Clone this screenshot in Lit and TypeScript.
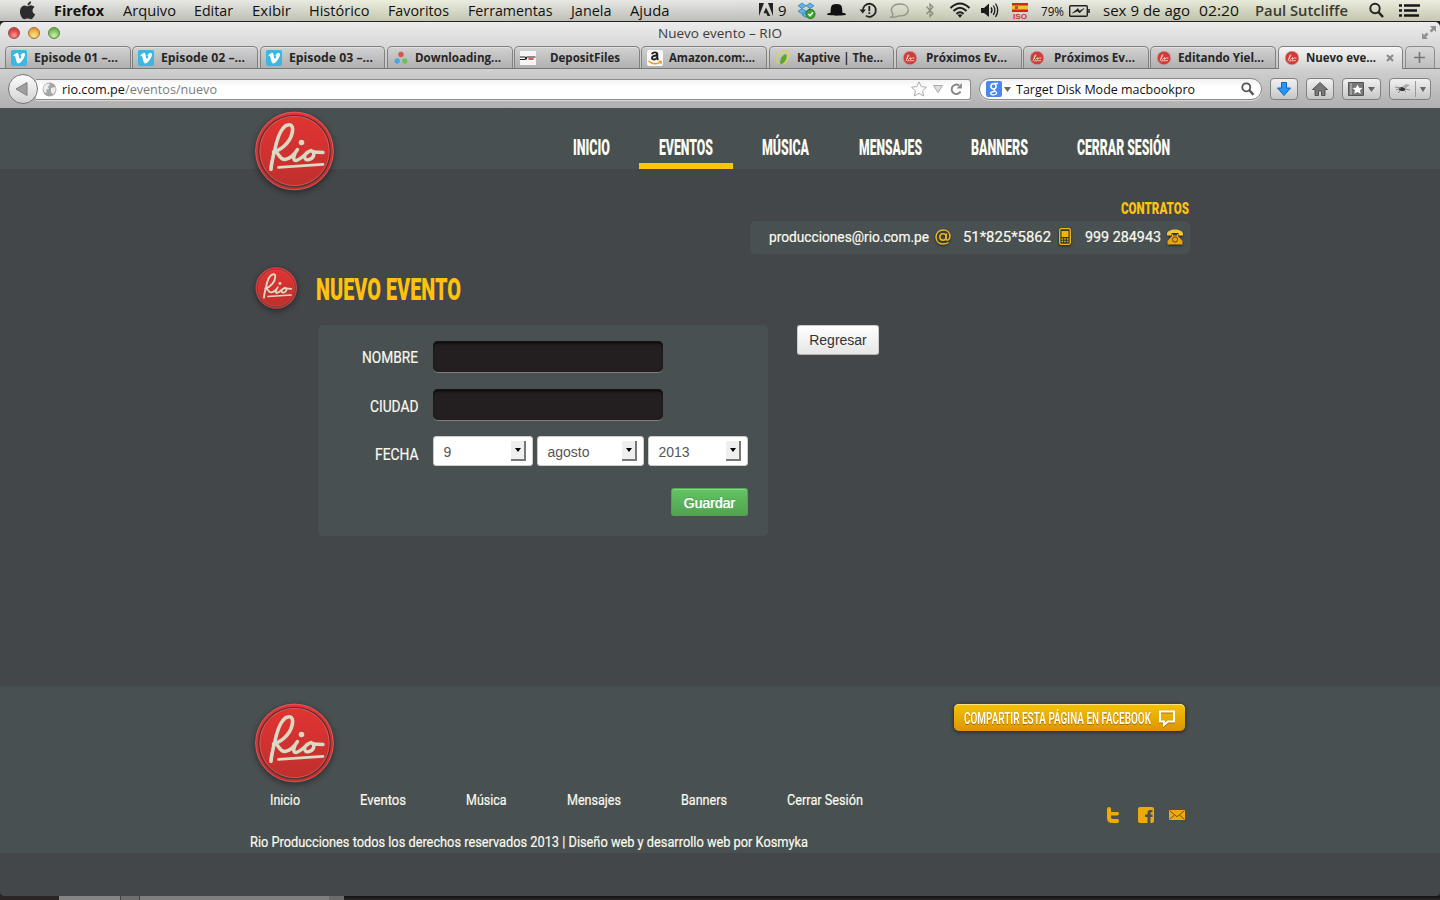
import { LitElement, html, svg, css, TemplateResult } from "lit";
import { customElement } from "lit/decorators.js";

// Single text line stretched to a known width; the slot may be wider than the text.
const line = (text: string, w: number, size: number, h: number, base: number, cls = "ui", slot = w, x = 0) => html`
  <svg class="line" width=${slot} height=${h} viewBox="0 0 ${slot} ${h}">
    <text class=${cls} x=${x} y=${base} font-size=${size} textLength=${w} lengthAdjust="spacingAndGlyphs">${text}</text>
  </svg>`;

const icon = (w: number, h: number, body: unknown, cls = "") =>
  html`<svg class="icon ${cls}" width=${w} height=${h} viewBox="0 0 ${w} ${h}">${body}</svg>`;

@customElement("rio-logo")
export class RioLogo extends LitElement {
  static properties = { size: { type: Number } };
  declare size: number;
  static styles = css`
    :host { display: block; line-height: 0; flex: none; }
    svg { overflow: visible; filter: drop-shadow(0 2px 3px rgba(0, 0, 0, 0.45)); }
  `;
  render() {
    return html`<svg width=${this.size} height=${this.size} viewBox="0 0 80 80">
      <defs><linearGradient id="g" x1="0" y1="0" x2="0" y2="1">
        <stop offset="0" stop-color="#e33433" /><stop offset="1" stop-color="#bd2f2d" />
      </linearGradient></defs>
      <circle cx="40.500" cy="40" r="39.2" fill="url(#g)" />
      <circle cx="40.500" cy="40" r="38.9" fill="none" stroke="#e8797a" stroke-width=".7" opacity=".8" />
      <circle cx="40.500" cy="40" r="35.7" fill="none" stroke="#4b3337" stroke-width="1.3" />
      <circle cx="40.500" cy="40" r="34.7" fill="none" stroke="#e8797a" stroke-width=".7" opacity=".75" />
      <g fill="none" stroke="#dad9c3" stroke-width="3.6" stroke-linecap="round" stroke-linejoin="round">
        <path d="M17 58.300C17.500 51 19 46 21 38C22.500 31 24.500 23 28.500 18C32 12.800 38.600 12 38.600 18C38.600 28 30 38 19.500 41" />
        <path d="M21 41C25 41 25 49 31 48.500C37 47.500 41 42.500 43.500 38.500C40 43 38 50 42 49.500C47 48.500 50 43.500 56 40C49.500 42 49 49.300 54 48.800C60 47.500 62 42 57 39.500C60 42 64 40.700 69 41.500" stroke-width="3.400" />
        <path d="M24.500 56.300L69 53.300" stroke-width="2.700" />
      </g>
      <circle cx="47.500" cy="31.500" r="2.800" fill="#dad9c3" />
    </svg>`;
  }
}

const vimeo = svg`<rect width="16" height="16" rx="2" fill="#3fb5e1"/><path d="M2.300 5.200L5.400 3C7 2.400 7.500 4 7.900 6.500C8.200 8.500 8.700 9.500 9.700 8C10.600 6.500 10.700 5.600 9.300 6C10 3.800 11.500 2.800 12.900 3C14.800 3.400 14.100 6.200 12.300 9C10.600 11.600 8.600 13.500 7.200 13.400C5.600 13.300 5.300 10.500 4.500 7.500C4.200 6.100 3.800 5.800 2.900 6.300Z" fill="#fff"/>`;
const trio = svg`<circle cx="8" cy="4.500" r="2.700" fill="#e2504e"/><circle cx="4.200" cy="11" r="2.700" fill="#44a9e0"/><circle cx="11.800" cy="11" r="2.700" fill="#6dc066"/>`;
const deposit = svg`<rect y="1" width="16" height="14" fill="#f6f6f6"/><path d="M0 7H5.500V9.500H0M6.500 9.500V7H15.500" stroke="#222" stroke-width="1" fill="none"/><path d="M8.500 9H13.500" stroke="#d22" stroke-width="1.300" fill="none"/>`;
const amazon = svg`<rect width="16" height="16" rx="2" fill="#f8f8f8"/><path d="M5 4.200C5.500 1.800 10.300 1.600 10.300 4.500V8.500L11.300 9.800M10.300 5.600C7 5.400 4.800 6.200 4.900 8C5.100 10.300 9.700 9.900 10.300 7" fill="none" stroke="#222" stroke-width="1.900"/><path d="M1.500 11C5 14.500 10.500 14.500 13.800 12M11.500 11.300H14.300L13.900 14" fill="none" stroke="#f29a1f" stroke-width="1.300"/>`;
const leaf = svg`<path d="M4 14C0 10 2 2 10 1C15 2 14 9 8.500 14.500" fill="none" stroke="#d6d84c" stroke-width="1.400"/><path d="M5.500 14.500C4.500 9 7 5 11.200 4C12.500 9 10 13 5.500 14.500Z" fill="#5ca62f"/>`;
const rio = svg`<circle cx="8" cy="8" r="6.800" fill="#d43a38" stroke="#b7aaaa" stroke-width=".6"/><path d="M4 11L6 5C7.500 4.200 7 7 5 8L6.500 9.500L8.500 7.500V9.500L10 8H12.500M5 11L12 10.500" fill="none" stroke="#f0dfd0" stroke-width=".8"/>`;

const tabs: [string, number, unknown][] = [
  ["Episode 01 –...", 84, vimeo], ["Episode 02 –...", 84, vimeo], ["Episode 03 –...", 84, vimeo],
  ["Downloading...", 86, trio], ["DepositFiles", 70, deposit], ["Amazon.com:...", 86, amazon],
  ["Kaptive | The...", 86, leaf], ["Próximos Ev...", 81, rio], ["Próximos Ev...", 81, rio],
  ["Editando Yiel...", 86, rio], ["Nuevo eve...", 70, rio],
];

const menus: [string, number][] = [
  ["Firefox", 50], ["Arquivo", 53], ["Editar", 39], ["Exibir", 39], ["Histórico", 60.5],
  ["Favoritos", 61], ["Ferramentas", 84.500], ["Janela", 40.5], ["Ajuda", 39.5],
];

const nav: [string, number][] = [
  ["INICIO", 37], ["EVENTOS", 54], ["MÚSICA", 47], ["MENSAJES", 63], ["BANNERS", 57], ["CERRAR SESIÓN", 93],
];

const footLinks: [string, number][] = [
  ["Inicio", 30], ["Eventos", 46], ["Música", 40.5], ["Mensajes", 54], ["Banners", 46], ["Cerrar Sesión", 76],
];

@customElement("app-root")
export class AppRoot extends LitElement {
  static styles = css`
    :host { display: block; width: 1440px; height: 900px; overflow: hidden; }
    * { box-sizing: border-box; }
    svg { display: block; flex: none; overflow: visible; }
    .screen { width: 1440px; height: 900px; display: flex; flex-direction: column; background: #201f20; }
    .ui { font-family: "Open Sans", "Noto Sans", sans-serif; fill: #111; }
    .uib { font-family: "Open Sans", "Noto Sans", sans-serif; font-weight: 700; fill: #262626; }
    .menu-b { font-family: "Open Sans", sans-serif; font-weight: 700; fill: #111; }
    .user { font-family: "Open Sans", sans-serif; font-weight: 600; fill: #3a3a32; }
    .title { font-family: "Open Sans", sans-serif; fill: #3c3c3c; }
    .grey { font-family: "Open Sans", sans-serif; fill: #7b7b7b; }
    .heavy { font-family: Roboto, sans-serif; font-weight: 900; fill: #fbfcf1; }
    .gold { font-family: Roboto, sans-serif; font-weight: 900; fill: #ffc20e; }
    .thin { font-family: Roboto, sans-serif; fill: #fafaee; stroke: #fafaee; stroke-width: .2px; }
    .share-t { font-family: Roboto, sans-serif; font-weight: 600; fill: #fffdf2; }
    .iso { font-family: "Liberation Sans", sans-serif; font-weight: 700; fill: #c33; }

    .menubar { height: 22px; display: flex; border-bottom: 1px solid #222;
      background: linear-gradient(rgba(255,255,255,.45), rgba(80,80,80,.17)), linear-gradient(90deg, #d4d4d0, #d3d5c9 18%, #dfe2c2 28%, #d5d7ca 36%, #d3d3d1 50%, #cfd2c6 58%, #d5dbbd 64%, #dcddd0 72%, #d3d8b8 85%, #dedfc6); }
    .apple { width: 54px; padding: 1px 0 0 19px; }
    .menus { display: flex; gap: 18.600px; width: 705px; }
    .status { display: flex; }
    .window { height: 874px; display: flex; flex-direction: column; border-radius: 5px 5px 4px 4px; overflow: hidden; background: #434749; flex: none; }
    .top { height: 47px; flex: none; background: linear-gradient(#ececec, #c4c4c4); display: flex; flex-direction: column; }
    .titlebar { height: 24px; display: flex; align-items: flex-start; }
    .lights { width: 658px; padding: 5px 0 0 8px; display: flex; gap: 8px; }
    .light { width: 12px; height: 12px; border-radius: 50%; border: 1px solid #8b5151; background: radial-gradient(circle at 50% 75%, #ff9c98, #e2474a 55%, #bc3438); }
    .light.y { border-color: #9a7236; background: radial-gradient(circle at 50% 75%, #ffe48f, #eda945 60%, #c87e2c); }
    .light.g { border-color: #5e8245; background: radial-gradient(circle at 50% 75%, #c8f3a5, #7dc05c 60%, #559a3c); }
    .full { margin-left: 640px; padding-top: 4px; }
    .tabs { height: 23px; padding-left: 5px; display: flex; gap: 1.5px; border-bottom: 1px solid #777; }
    .tab { width: 125.75px; height: 22px; display: flex; align-items: center; padding-left: 5px; gap: 6px; border: 1px solid #808080; border-bottom: 0; border-radius: 5px 5px 0 0; background: linear-gradient(#d2d2d2, #b0b0b0); box-shadow: inset 0 1px rgba(255,255,255,.35); flex: none; }
    .tab-label { width: 86px; display: flex; justify-content: center; }
    .tab.on { height: 23px; background: linear-gradient(#f4f4f4, #d2d2d2); }
    .tab.on .tab-label { width: 70px; }
    .tab.on .icon:last-child { margin-left: 4px; }
    .plus { width: 30px; height: 22px; border: 1px solid #8c8c8c; border-bottom: 0; border-radius: 5px 5px 0 0; display: flex; align-items: center; justify-content: center; background: linear-gradient(#d9d9d9, #bdbdbd); }
    .toolbar { height: 39px; flex: none; display: flex; align-items: flex-start; padding: 5px 9px 0 8px; background: linear-gradient(#d0d0d0, #b0b0b0); }
    .back { width: 30px; height: 30px; border-radius: 50%; border: 1px solid #777; background: linear-gradient(#fdfdfd, #d3d3d3); z-index: 1; display: flex; align-items: center; padding-left: 6px; flex: none; }
    .url { width: 935px; height: 21px; margin: 4.500px 0 0 -2px; border: 1px solid #8b8b8b; border-left: 0; border-radius: 0 3px 3px 0; background: linear-gradient(#f4f4f4, #fff 40%); display: flex; align-items: center; padding-left: 6px; box-shadow: 0 1px rgba(255,255,255,.5); }
    .addr { display: flex; margin-left: 5px; width: 849px; }
    .addr-icons { display: flex; gap: 6px; align-items: center; }
    .search { width: 283px; height: 22px; margin: 4px 0 0 7.500px; border: 1px solid #8b8b8b; border-radius: 11px; background: linear-gradient(#f2f2f2, #fff 40%); display: flex; align-items: center; padding-left: 6px; box-shadow: 0 1px rgba(255,255,255,.5); }
    .btns { display: flex; gap: 8px; margin: 4px 0 0 8.500px; }
    .btn { width: 28px; height: 22px; border: 1px solid #818181; border-radius: 4px; background: linear-gradient(#f1f1f1, #c6c6c6); display: flex; align-items: center; justify-content: center; }
    .btn.wide { width: 39px; gap: 4px; }
    .btn.fly { width: 42px; gap: 4px; }

    .page { flex: 1; display: flex; flex-direction: column; }
    .wrap { width: 940px; margin: 0 auto; display: flex; }
    .header { height: 61px; background: #495052; flex: none; }
    .header .wrap { height: 61px; justify-content: space-between; }
    .header rio-logo { margin: 3px 0 0 4px; height: 80px; }
    .nav { display: flex; gap: 9.200px; height: 61px; }
    .nav-item { padding: 27px 20px 0; height: 61px; }
    .nav-item.on { border-bottom: 6px solid #ffc20e; }
    .contact { flex-direction: column; align-items: flex-end; height: 98px; padding-top: 30px; }
    .contact-bar { width: 440px; height: 33px; margin-top: 5px; padding: 0 6px 0 19px; display: flex; align-items: center; border-radius: 5px; background: #495052; }
    .contact-bar .icon { filter: drop-shadow(0 1px 1px rgba(0,0,0,.6)); position: relative; top: -1px; }
    .g1 { margin: 0 11px 0 6px; } .g2 { margin: 0 14px 0 8px; } .g3 { margin-left: 6px; }
    .heading { height: 58px; padding-left: 4.500px; }
    .heading rio-logo { height: 42px; }
    .heading .line { margin-left: 19.500px; }
    .content { padding-left: 68px; height: 361px; align-items: flex-start; gap: 29px; }
    .panel { width: 450px; height: 211px; padding: 16px 20px 0 0; border-radius: 5px; background: #495052; display: flex; flex-direction: column; }
    .row { display: flex; height: 48px; }
    .label { width: 115px; padding-right: 15px; display: flex; justify-content: flex-end; padding-top: 1px; }
    .field { width: 230px; height: 32px; border-radius: 5px; background: #231f20; border-bottom: 1px solid #817d82; box-shadow: inset 0 3px 2px #111; }
    .selects { display: flex; gap: 4px; margin-top: -1px; }
    .select { width: 100px; height: 30px; background: #fff; border: 1px solid #ccc; border-radius: 3px; display: flex; align-items: center; justify-content: space-between; padding: 0 6px 0 9.500px; font: 14px "Liberation Sans", Arial, sans-serif; color: #555; }
    .select span { padding-top: 2px; }
    .select.mid { width: 107px; }
    .arrow { width: 15px; height: 20px; background: #efefef; border: solid #777; border-width: 0 2px 2px 0; display: flex; align-items: center; justify-content: center; }
    .save { align-self: flex-end; width: 77px; height: 28px; margin-top: 3px; border-radius: 3px; border: 1px solid #51a351; border-top-color: #55a955; background: linear-gradient(#62c462, #51a351); box-shadow: inset 0 1px rgba(255,255,255,.25); color: #fff; font: 14px/28px "Liberation Sans", Arial, sans-serif; text-align: center; text-shadow: 0 0 1px #fff, 0 -1px rgba(0,0,0,.25); }
    .return { width: 82px; height: 30px; border-radius: 3px; border: 1px solid #ccc; border-bottom-color: #b3b3b3; background: linear-gradient(#fff, #e6e6e6); color: #333; font: 14px/29px "Liberation Sans", Arial, sans-serif; text-align: center; }

    .footer { height: 167px; background: #495052; }
    .footer .wrap { justify-content: space-between; }
    .foot-left { display: flex; flex-direction: column; }
    .foot-left rio-logo { margin: 17px 0 0 4px; height: 80px; }
    .foot-links { display: flex; gap: 60.200px; padding-left: 20px; margin-top: 6px; }
    .copy { margin-top: 20px; }
    .foot-right { display: flex; flex-direction: column; align-items: flex-end; padding: 18px 5px 0 0; }
    .share { width: 231px; height: 27px; border-radius: 5px; background: linear-gradient(#f2c305, #dd9500); box-shadow: inset 0 1px #ffe37a, 0 1px 4px rgba(0,0,0,.6); display: flex; align-items: center; padding-left: 10px; gap: 8px; }
    .share .line, .share .icon { filter: drop-shadow(0 1px 0 rgba(120,75,0,.6)); }
    .social { display: flex; margin-top: 76px; }
    .tw { margin-right: 19px; } .fb { margin-right: 15px; }
    .behind { height: 4px; display: flex; background: linear-gradient(#111, #2c2a2b); }
    .b1 { width: 59px; background: #2b2526; } .b2 { width: 61px; background: #858585; } .b3 { width: 20px; background: #6e6e6e; border: solid #444; border-width: 0 1px; }
    .b4 { width: 189px; background: #7f7f7f; } .b5 { width: 15px; background: #6b6b6b; }
  `;

  private tri(w = 8, fill = "#666"): TemplateResult {
    return icon(w, 5, svg`<path d="M0 0H${w}L${w / 2} 5Z" fill=${fill} />`);
  }

  private menubar() {
    const m = (t: string, w: number, slot: number, cls = "ui", size = 14) => line(t, w, size, 21, 16, cls, slot);
    return html`<div class="menubar">
      <div class="apple">${icon(17, 19, svg`<path d="M8.500 5.200C9.500 5.200 10.800 4.200 12.700 4.400C14 4.500 15 5.200 15.600 6C12.500 8 13 12 16.200 13.300C15.300 15.500 13.500 18.300 11.800 18.300C10.600 18.300 10.200 17.600 8.700 17.600C7.200 17.600 6.700 18.300 5.500 18.300C3 18.200 .8 13.500 1 10.200C1.200 6.500 3.500 4.400 5.700 4.400C6.900 4.400 7.800 5.200 8.500 5.200Z M8.500 4.400C8.300 2.300 10 .4 12.100 .2C12.300 2.400 10.600 4.300 8.500 4.400Z" fill="#2c2c2c"/>`)}</div>
      <div class="menus">${menus.map(([t, w], i) => m(t, w, w, i ? "ui" : "menu-b"))}</div>
      <div class="status">
        ${icon(19, 21, svg`<path d="M0 3H5L0 16ZM9 3H14V16ZM7 7.500L11.300 16H8.500L7.300 13.200H4.500Z" fill="#222"/>`)}
        ${m("9", 8.500, 19)}
        ${icon(30, 21, svg`<path d="M5 3L9 5.800L5 8.500L1 5.800ZM13 3L17 5.800L13 8.500L9 5.800ZM5 8.500L9 11.200L5 14L1 11.200ZM13 8.500L17 11.200L13 14L9 11.200ZM5 15L9 12.500L13 15L9 17.500Z" fill="#5fb4e5" stroke="#2b7db8" stroke-width=".7"/><circle cx="13.500" cy="14" r="4.500" fill="#3da531" stroke="#23771d"/><path d="M11.300 14L13 15.700L16 12.200" fill="none" stroke="#fff" stroke-width="1.400"/>`)}
        ${icon(33, 21, svg`<path d="M3.500 13C4 7 3.500 4 9.500 4C15.500 4 15 7 15.500 13C18 13 19 13.500 19 14.500C18.500 16 .5 16 0 14.500C0 13.500 1 13 3.500 13Z" fill="#111"/>`)}
        ${icon(30, 21, svg`<path d="M3 11.500A6.500 6.500 0 1 1 6 15.800" fill="none" stroke="#222" stroke-width="1.800"/><path d="M-.5 9.500H6L2.700 13.500Z" fill="#222"/><path d="M9.300 6V11.200M9.300 12.200V14" stroke="#222" stroke-width="1.800"/>`)}
        ${icon(36, 21, svg`<path d="M1 17C3 16 3.200 15 3 14C-1 9 3 4 10 4C15 4 18.300 6.500 18.300 10C18.300 14 14 16.300 9 15.800C7 17 4 17.500 1 17Z" fill="none" stroke="#909189" stroke-width="1.300"/>`)}
        ${icon(24, 21, svg`<path d="M.5 6.500L7 13.500L4 16.500V4L7 7L.5 14" fill="none" stroke="#888981" stroke-width="1.200"/>`)}
        ${icon(31, 21, svg`<g fill="none" stroke="#1c1c1c" stroke-width="2.100"><path d="M.5 8Q10 -1 19.500 8M3.500 11Q10 4.500 16.500 11M6.500 14Q10 10.500 13.500 14"/></g><path d="M7.800 15.300Q10 13 12.200 15.300L10 17.700Z" fill="#1c1c1c"/>`)}
        ${icon(31, 21, svg`<path d="M0 8H3L8 3.500V17L3 13H0Z" fill="#1c1c1c"/><path d="M10 7.500Q12 10.300 10 13M12.300 5.500Q15.500 10.300 12.300 15M14.500 3.500Q19 10.300 14.500 17" fill="none" stroke="#1c1c1c" stroke-width="1.300"/>`)}
        ${icon(29, 21, svg`<path d="M0 3H16V12H0Z" fill="#c92a25"/><path d="M0 5.500H16V9.500H0Z" fill="#f3c22b"/><path d="M3 6H6V9H3Z" fill="#b5562b"/><text class="iso" x="1" y="18.500" font-size="6.500" textLength="14" lengthAdjust="spacingAndGlyphs">ISO</text>`)}
        ${m("79%", 23, 28, "ui", 12)}
        ${icon(34, 21, svg`<rect x=".7" y="5.700" width="17.600" height="10.600" rx="1" fill="none" stroke="#222" stroke-width="1.400"/><path d="M20 9V13" stroke="#222" stroke-width="1.600"/><path d="M3.500 13L9 8.500L10.500 11L15 8.500L10.500 13L8.700 11Z" fill="#222" stroke="#222" stroke-width=".6"/>`)}
        ${m("sex 9 de ago", 87, 96)} ${m("02:20", 40, 56)} ${m("Paul Sutcliffe", 93, 114, "user")}
        ${icon(30, 21, svg`<circle cx="6" cy="8.500" r="4.700" fill="none" stroke="#222" stroke-width="1.900"/><path d="M9.300 12L14 17" stroke="#222" stroke-width="2.500"/>`)}
        ${icon(41, 21, svg`<path d="M0 5.500H3M0 10.500H3M0 15.500H3M5 5.500H21M5 10.500H18M5 15.500H20" stroke="#161616" stroke-width="2.700"/>`)}
      </div>
    </div>`;
  }

  private browser() {
    return html`<div class="top">
        <div class="titlebar">
          <div class="lights"><div class="light"></div><div class="light y"></div><div class="light g"></div></div>
          ${line("Nuevo evento – RIO", 124, 13, 24, 16, "title")}
          <div class="full">${icon(15, 15, svg`<path d="M8 0H14V6L12 4L9.500 6.500L7.700 4.700L10 2.200ZM0 7L2 9L4.500 6.500L6.500 8.300L4 11L6 13H0Z" fill="#929292"/>`)}</div>
        </div>
        <div class="tabs">
          ${tabs.map(([t, w, ic], i) => html`<div class="tab ${i === 10 ? "on" : ""}">${icon(16, 16, ic)}<div class="tab-label">${line(t, w, 11.5, 20, 14, "uib")}</div>
            ${i === 10 ? icon(8, 8, svg`<path d="M1 1L7 7M7 1L1 7" stroke="#888" stroke-width="2"/>`) : ""}</div>`)}
          <div class="plus">${icon(11, 11, svg`<path d="M5.500 0V11M0 5.500H11" stroke="#777" stroke-width="1.700"/>`)}</div>
        </div>
      </div>
      <div class="toolbar">
        <div class="back">${icon(13, 14, svg`<path d="M12 .5V13.500L1 7Z" fill="#a0a0a0" stroke="#808080"/>`)}</div>
        <div class="url">
          ${icon(15, 15, svg`<circle cx="7.500" cy="7.500" r="6.900" fill="#a6a6a6"/><path d="M2 4C4 1 7 1 8 2L6 5L7 7L4 7.500L5 10L3 11C1 9 1 6 2 4ZM9 6L13.500 5V9L11 12.500L9 10Z" fill="#ececec"/>`)}
          <div class="addr">${line("rio.com.pe", 63, 13, 19, 14, "ui")}${line("/eventos/nuevo", 92, 13, 19, 14, "grey")}</div>
          <div class="addr-icons">
            ${icon(16, 16, svg`<path d="M8 .8L10.200 5.600L15.500 6.200L11.600 9.700L12.600 15L8 12.300L3.400 15L4.400 9.700L.5 6.200L5.800 5.600Z" fill="#fff" stroke="#aaa"/>`)}
            ${icon(10, 8, svg`<path d="M.5 .5H9.500L5 7.500Z" fill="#ddd" stroke="#aaa"/>`)}
            ${icon(14, 14, svg`<path d="M11.500 9.500A4.700 4.700 0 1 1 10 3.400" fill="none" stroke="#888" stroke-width="2"/><path d="M12.800 1V6.500H7.500Z" fill="#888"/>`)}
          </div>
        </div>
        <div class="search">
          ${icon(18, 16, svg`<rect width="16" height="16" rx="2" fill="#4a87ee"/><circle cx="7.500" cy="5.300" r="2.600" fill="none" stroke="#fff" stroke-width="1.500"/><path d="M8 2.500H12M9 8Q7 9 9 10Q12 12 9.500 13.500C7 14.500 3.500 13.500 5 11.500Q6 10.500 8.500 10.500" fill="none" stroke="#fff" stroke-width="1.300"/>`)}
          ${this.tri(7)}
          ${line("Target Disk Mode macbookpro", 179, 13, 20, 14.5, "ui", 230, 5)}
          ${icon(14, 14, svg`<circle cx="5.300" cy="5.300" r="4" fill="none" stroke="#555" stroke-width="1.800"/><path d="M8 8L12.500 12.800" stroke="#555" stroke-width="2.400"/>`)}
        </div>
        <div class="btns">
          <div class="btn">${icon(14, 14, svg`<path d="M4.500 .5H9.500V6H13.500L7 13.500L.5 6H4.500Z" fill="#2595f8" stroke="#1263ba"/>`)}</div>
          <div class="btn">${icon(16, 14, svg`<path d="M8 .5L15.500 7.500H13V13.500H9.500V9H6.500V13.500H3V7.500H.5Z" fill="#777" stroke="#555"/>`)}</div>
          <div class="btn wide">${icon(16, 14, svg`<path d="M.5 .5H15.500V13.500H.5Z" fill="#777" stroke="#555"/><path d="M3 1V13" stroke="#ccc"/><path d="M9.500 2.500L11 5.700L14.500 6L12 8.300L12.800 11.700L9.500 9.900L6.200 11.700L7 8.300L4.500 6L8 5.700Z" fill="#fff"/>`)}${this.tri(7)}</div>
          <div class="btn fly">${icon(17, 14, svg`<ellipse cx="8" cy="7" rx="3.200" ry="2" fill="#333"/><path d="M1 5L7 6L2 8M7 8L4 11M10 8L12 10M11 7L16 8" stroke="#777" stroke-width=".8" fill="none"/><path d="M8 5L12 2L16 3L11 6.500Z" fill="#aaa"/>`)}${icon(1, 16, svg`<path d="M.5 0V16" stroke="#999"/>`)}${this.tri(6)}</div>
        </div>
      </div>`;
  }

  private select(value: string, cls = "") {
    return html`<div class="select ${cls}"><span>${value}</span><div class="arrow">${icon(6, 4, svg`<path d="M0 0H6L3 4Z" fill="#000"/>`)}</div></div>`;
  }

  private site() {
    return html`<div class="page">
      <div class="header"><div class="wrap">
        <rio-logo .size=${80}></rio-logo>
        <div class="nav">${nav.map(([t, w], i) => html`<div class="nav-item ${i === 1 ? "on" : ""}">${line(t, w, 21.5, 24, 19.5, "heavy")}</div>`)}</div>
      </div></div>
      <div class="wrap contact">
        ${line("CONTRATOS", 68, 17, 17, 15, "gold", 69)}
        <div class="contact-bar">
          ${line("producciones@rio.com.pe", 160, 15.5, 20, 14, "thin")}
          ${icon(17, 16, svg`<circle cx="8" cy="8" r="3.200" fill="none" stroke="#efb21c" stroke-width="1.600"/><path d="M11.500 4.500L10.800 9.500C10.700 12 14.800 11.500 15 7.500C15 3.500 12 1 8.300 1C4 1 1 4 1 8C1 12.500 4 15 8 15C10.500 15 12 14.500 13.500 13.500" fill="none" stroke="#efb21c" stroke-width="1.500"/>`, "g1")}
          ${line("51*825*5862", 88, 15.500, 20, 14, "thin")}
          ${icon(12, 17, svg`<rect x=".7" y=".7" width="10.600" height="15.600" rx="1.500" fill="#3b3428" stroke="#f5b91c" stroke-width="1.300"/><rect x="2.500" y="3" width="7" height="6" fill="#f2b211"/><path d="M2.500 11H9.500M2.500 13.500H9.500" stroke="#f2b211" stroke-width="1.500" stroke-dasharray="1.500 1.200"/>`, "g2")}
          ${line("999 284943", 76, 15.500, 20, 14, "thin")}
          ${icon(16, 16, svg`<path d="M0 5C0 -1 16 -1 16 5V6.500H11.500V4H4.500V6.500H0Z" fill="#f8c63c"/><path d="M5 5H6V6.500H10V5H11V7L15.500 12V15.500H.5V12L5 7Z" fill="#e9a30c"/><circle cx="8" cy="10.500" r="2.600" fill="none" stroke="#5b481e" stroke-width="1"/>`, "g3")}
        </div>
      </div>
      <div class="wrap heading"><rio-logo .size=${42}></rio-logo>${line("NUEVO EVENTO", 145, 31, 40, 33, "gold")}</div>
      <div class="wrap content">
        <div class="panel">
          <div class="row"><div class="label">${line("NOMBRE", 56, 17, 24, 21, "thin")}</div><div class="field"></div></div>
          <div class="row"><div class="label">${line("CIUDAD", 48.5, 17, 24, 22, "thin")}</div><div class="field"></div></div>
          <div class="row"><div class="label">${line("FECHA", 43.5, 17, 24, 22, "thin")}</div>
            <div class="selects">${this.select("9")}${this.select("agosto", "mid")}${this.select("2013")}</div></div>
          <div class="save">Guardar</div>
        </div>
        <div class="return">Regresar</div>
      </div>
      <div class="footer"><div class="wrap">
        <div class="foot-left">
          <rio-logo .size=${80}></rio-logo>
          <div class="foot-links">${footLinks.map(([t, w]) => line(t, w, 15, 22, 16, "thin"))}</div>
          <div class="copy">${line("Rio Producciones todos los derechos reservados 2013 | Diseño web y desarrollo web por Kosmyka", 558, 15, 22, 16, "thin")}</div>
        </div>
        <div class="foot-right">
          <div class="share">${line("COMPARTIR ESTA PÁGINA EN FACEBOOK", 187, 16, 22, 17, "share-t")}${icon(16, 16, svg`<path d="M1 1.500H15V11.500H9L5 15V11.500H1Z" fill="none" stroke="#fff" stroke-width="2"/>`)}</div>
          <div class="social">
            ${icon(12, 16, svg`<path d="M2 0Q4 0 4 2V5H10.500Q12 5 12 6.500Q12 8 10.500 8.500H4V10.500Q4 12 6 12H10.500Q12 12 12 14Q12 16 10.500 16H5Q0 16 0 11V2Q0 0 2 0Z" fill="#eeaa0b"/>`, "tw")}
            ${icon(16, 16, svg`<path d="M2 0H14Q16 0 16 2V14Q16 16 14 16H12.500V10H14.500V7.500H12.500V6Q12.500 5.300 13.500 5.300H14.500V3H12Q9.500 3 9.500 6V7.500H7V10H9.500V16H2Q0 16 0 14V2Q0 0 2 0Z" fill="#eeaa0b"/>`, "fb")}
            ${icon(16, 16, svg`<rect y="3" width="16" height="10" rx="1" fill="#eeaa0b"/><path d="M1 4L7 9Q8 10 9 9L15 4M1 12L5.500 8M15 12L10.500 8" fill="none" stroke="#5c4d2a" stroke-width=".9"/>`)}
          </div>
        </div>
      </div></div>
    </div>`;
  }

  render() {
    return html`<div class="screen">${this.menubar()}
      <div class="window">${this.browser()}${this.site()}</div>
      <div class="behind"><div class="b1"></div><div class="b2"></div><div class="b3"></div><div class="b4"></div><div class="b5"></div></div>
    </div>`;
  }
}
